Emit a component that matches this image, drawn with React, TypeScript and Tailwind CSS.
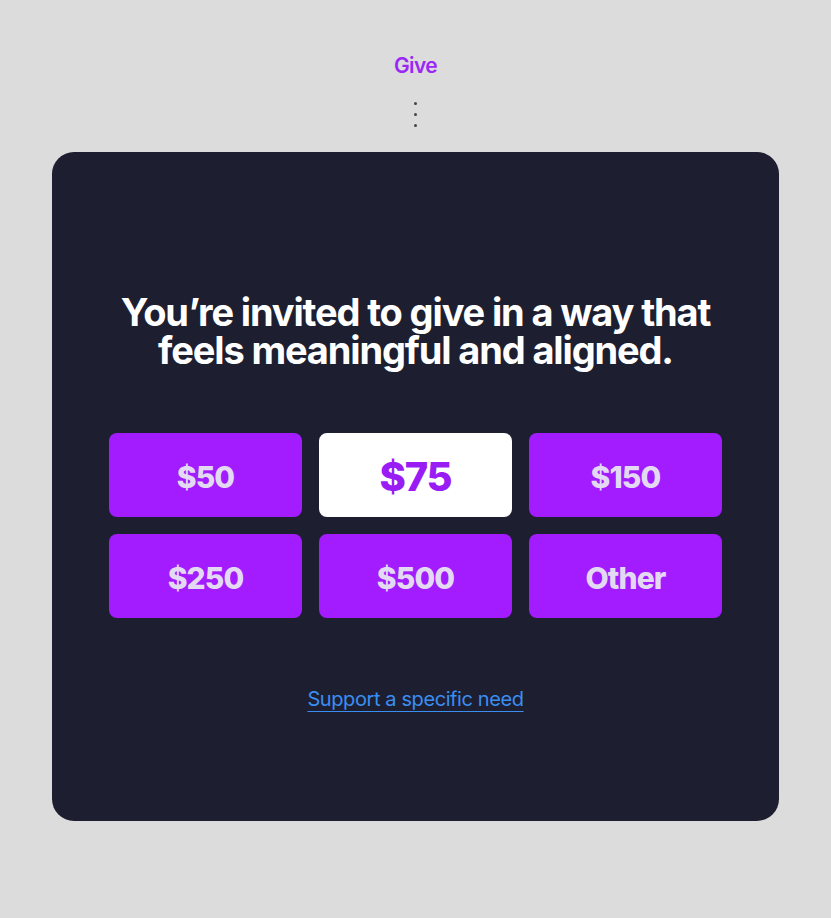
import React, { useState } from 'react';

const amounts = ['$50', '$75', '$150', '$250', '$500', 'Other'];

export default function App() {
  const [selected, setSelected] = useState('$75');

  return (
    <div className="min-h-[918px] w-full bg-[#dcdcdc] flex flex-col items-center pt-[52px] font-['Inter',sans-serif]">
      {/* Header */}
      <div className="text-[21px] leading-[28px] font-semibold tracking-[-0.03em] text-[#9b27f5]">Give</div>
      <div className="mt-[22px] flex flex-col items-center gap-[8px]">
        <span className="w-[3px] h-[3px] rounded-full bg-[#444]" />
        <span className="w-[3px] h-[3px] rounded-full bg-[#444]" />
        <span className="w-[3px] h-[3px] rounded-full bg-[#444]" />
      </div>

      {/* Card */}
      <div className="mt-[25px] w-[727px] h-[669px] rounded-[22px] bg-[#1d1f30] flex flex-col items-center pt-[141px] px-[57px]">
        <h1 className="text-center text-white text-[38px] leading-[38px] font-bold tracking-[-0.03em]">
          You’re invited to give in a way that
          <br />
          feels meaningful and aligned.
        </h1>

        <div className="mt-[64px] w-full grid grid-cols-3 gap-x-[17px] gap-y-[17px]">
          {amounts.map((a) => {
            const active = a === selected;
            return (
              <button
                key={a}
                onClick={() => setSelected(a)}
                className={
                  active
                    ? 'h-[84px] rounded-[8px] bg-white text-[#9a1cf5] text-[40px] font-extrabold tracking-[-0.03em] flex items-center justify-center'
                    : 'h-[84px] rounded-[8px] bg-[#a21cff] text-[#e3d9f2] text-[30px] font-extrabold tracking-[-0.03em] flex items-center justify-center'
                }
              >
                <span className="translate-y-[2px]">{a}</span>
              </button>
            );
          })}
        </div>

        <a href="#" className="mt-[68px] text-[20px] leading-[26px] text-[#3a8ef2] underline underline-offset-[5px] decoration-1 tracking-[-0.02em]">
          Support a specific need
        </a>
      </div>
    </div>
  );
}
